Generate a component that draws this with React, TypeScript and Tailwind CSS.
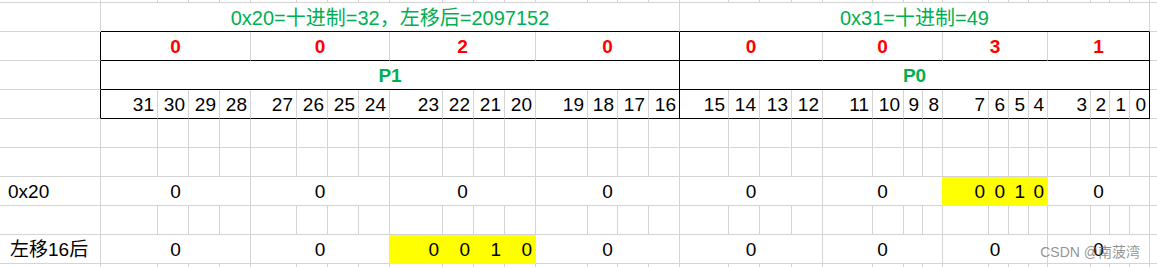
import React from 'react';

type Edge = 'g' | 'k' | 'y';

const RIGHT: Record<Edge, string> = {
  g: 'border-r-[#d4d4d4]',
  k: 'border-r-black',
  y: 'border-r-[#ffff00]',
};
const BOTTOM: Record<Edge, string> = {
  g: 'border-b-[#d4d4d4]',
  k: 'border-b-black',
  y: 'border-b-[#ffff00]',
};
const SPAN: Record<number, string> = { 1: '', 4: 'col-span-4', 16: 'col-span-16' };

const BITS = Array.from({ length: 32 }, (_, i) => 31 - i);
const GROUPS = [0, 1, 2, 3, 4, 5, 6, 7];
const HEX = ['0', '0', '2', '0', '0', '0', '3', '1'];
const YELLOW_BITS = ['0', '0', '1', '0'];

interface CellProps {
  span?: number;
  r?: Edge;
  b?: Edge;
  className?: string;
  children?: React.ReactNode;
}

function Cell({ span = 1, r = 'g', b = 'g', className = '', children }: CellProps) {
  return (
    <div
      className={`flex items-center whitespace-nowrap border-r border-b ${SPAN[span]} ${RIGHT[r]} ${BOTTOM[b]} ${className}`}
    >
      {children}
    </div>
  );
}

// a row of empty cells across all 34 columns
function EmptyRow({ id }: { id: string }) {
  return (
    <>
      {Array.from({ length: 34 }, (_, i) => (
        <Cell key={`${id}-${i}`} />
      ))}
    </>
  );
}

// value row: merged groups with a centred 0, one group split into yellow cells
function ValueRow({ label, yellowGroup, labelPad }: { label: string; yellowGroup: number; labelPad: string }) {
  return (
    <>
      <Cell className={`pt-[2px] ${labelPad}`}>{label}</Cell>
      {GROUPS.map((g) =>
        g === yellowGroup ? (
          YELLOW_BITS.map((v, i) => (
            <Cell
              key={`y-${label}-${i}`}
              r="y"
              b="y"
              className={`justify-end bg-[#ffff00] pt-[2px] pr-[3px] ${i === 0 ? '-ml-px' : ''}`}
            >
              {v}
            </Cell>
          ))
        ) : (
          <Cell key={`v-${label}-${g}`} span={4} className="justify-center pt-[2px]">
            0
          </Cell>
        )
      )}
      <Cell />
    </>
  );
}

export default function App() {
  return (
    <div className="relative h-[267px] w-[1157px] overflow-hidden bg-white font-['Liberation_Sans','Noto_Sans_CJK_SC',sans-serif] text-[19px] text-black">
      <div className="grid grid-cols-[101px_57px_31px_31px_31px_46px_31px_31px_31px_53px_31px_31px_31px_52px_30px_31px_31px_49px_31px_32px_31px_50px_31px_19px_20px_46px_20px_20px_19px_43px_19px_20px_20px_40px] grid-rows-[3px_repeat(9,29px)_10px]">
        {/* partial row at the top */}
        <EmptyRow id="top" />

        {/* title row */}
        <Cell />
        <Cell span={16} b="k" className="justify-center pt-[2px] text-[20px] text-[#00b050]">
          0x20=十进制=32，左移后=2097152
        </Cell>
        <Cell span={16} b="k" className="justify-center pt-[2px] text-[20px] text-[#00b050]">
          0x31=十进制=49
        </Cell>
        <Cell />

        {/* hex digits */}
        <Cell r="k" />
        {GROUPS.map((g) => (
          <Cell
            key={`hex-${g}`}
            span={4}
            r={g === 3 || g === 7 ? 'k' : 'g'}
            b="k"
            className="justify-center pt-[2px] font-bold text-[#ff0000]"
          >
            {HEX[g]}
          </Cell>
        ))}
        <Cell />

        {/* port names */}
        <Cell r="k" />
        <Cell span={16} r="k" b="k" className="justify-center pt-[2px] font-bold text-[#00b050]">
          P1
        </Cell>
        <Cell span={16} r="k" b="k" className="justify-center pt-[2px] font-bold text-[#00b050]">
          P0
        </Cell>
        <Cell />

        {/* bit numbers */}
        <Cell r="k" />
        {BITS.map((bit) => (
          <Cell
            key={`bit-${bit}`}
            r={bit === 16 || bit === 0 ? 'k' : 'g'}
            b="k"
            className="justify-end pt-[2px] pr-[3px]"
          >
            {bit}
          </Cell>
        ))}
        <Cell />

        <EmptyRow id="e1" />
        <EmptyRow id="e2" />

        <ValueRow label="0x20" yellowGroup={6} labelPad="pl-[8px]" />

        <EmptyRow id="e3" />

        <ValueRow label="左移16后" yellowGroup={2} labelPad="pl-[10px]" />

        <EmptyRow id="bottom" />
      </div>

      {/* watermark */}
      <div className="absolute right-[17px] bottom-[8px] text-[14px] leading-none text-[rgba(110,110,110,0.75)]">
        CSDN @南菠湾
      </div>
    </div>
  );
}
